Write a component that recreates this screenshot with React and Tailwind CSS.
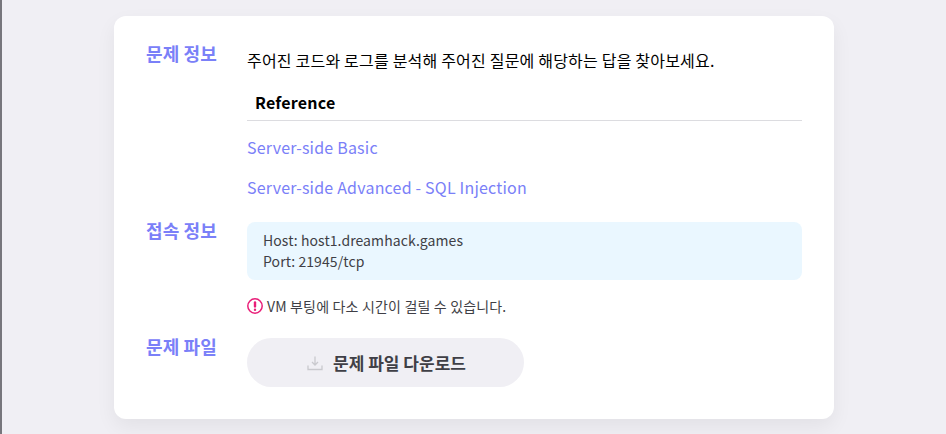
export default function App() {
  return (
    <div className="h-[434px] w-[946px] overflow-hidden border-l-2 border-[#77767c] bg-[#f0eff4] pl-[112px] pt-4 font-['Noto_Sans_CJK_KR','Noto_Sans',sans-serif]">
      <div className="h-[403px] w-[720px] rounded-xl bg-white pl-8 pr-8 pt-4 shadow-[0_8px_20px_rgba(0,0,0,0.06)]">
        {/* 문제 정보 */}
        <div className="flex">
          <div className="w-[101px] shrink-0 pt-[12px] text-[18px] leading-[18px] font-bold tracking-[0.1px] text-[#7a80f8]">문제 정보</div>
          <div className="flex-1 tracking-[0.2px]">
            <p className="pt-[16px] text-[16px] leading-[24px] text-black">주어진 코드와 로그를 분석해 주어진 질문에 해당하는 답을 찾아보세요.</p>
            <div className="mt-[18px] border-b border-[#dcdce0] pb-[6px] pl-2 text-[16px] leading-[24px] font-bold text-black">Reference</div>
            <div className="mt-[14px] text-[16px] leading-[24px] text-[#7a80f8]">Server-side Basic</div>
            <div className="mt-4 text-[16px] leading-[24px] text-[#7a80f8]">Server-side Advanced - SQL Injection</div>
          </div>
        </div>
        {/* 접속 정보 */}
        <div className="mt-[23px] flex">
          <div className="-mt-px w-[101px] shrink-0 text-[18px] leading-[18px] font-bold tracking-[0.1px] text-[#7a80f8]">접속 정보</div>
          <div className="flex-1">
            <div className="h-[58px] rounded-lg bg-[#eaf7ff] px-4 py-2 text-[14px] leading-[21px] tracking-[0.08px] text-[#3f3f46]">
              <div>Host: host1.dreamhack.games</div>
              <div>Port: 21945/tcp</div>
            </div>
            <div className="mt-[16px] flex items-center gap-1 text-[14px] leading-[20px] tracking-[0.17px] text-[#3f3f46]">
              <svg width="16" height="16" viewBox="0 0 16 16" fill="none">
                <circle cx="8" cy="8" r="7.2" stroke="#e91e78" strokeWidth="1.5" />
                <rect x="6.8" y="3.2" width="2.4" height="6.4" rx="1.2" fill="#e91e78" />
                <circle cx="8" cy="11.8" r="1.2" fill="#e91e78" />
              </svg>
              <span>VM 부팅에 다소 시간이 걸릴 수 있습니다.</span>
            </div>
          </div>
        </div>
        {/* 문제 파일 */}
        <div className="mt-[22px] flex">
          <div className="-mt-px w-[101px] shrink-0 text-[18px] leading-[18px] font-bold tracking-[0.1px] text-[#7a80f8]">문제 파일</div>
          <div className="flex h-[49px] w-[277px] items-center justify-center gap-[10px] rounded-full bg-[#f0eff4] pl-[2px] text-[17px] font-bold text-[#3f3f46]">
            <svg width="16" height="16" viewBox="0 0 16 16" fill="none" stroke="#c9c9ce" strokeWidth="1.3">
              <path d="M8 1.5v8M5 7l3 3 3-3" />
              <path d="M1 10.5v4h14v-4" />
            </svg>
            <span>문제 파일 다운로드</span>
          </div>
        </div>
      </div>
    </div>
  );
}
